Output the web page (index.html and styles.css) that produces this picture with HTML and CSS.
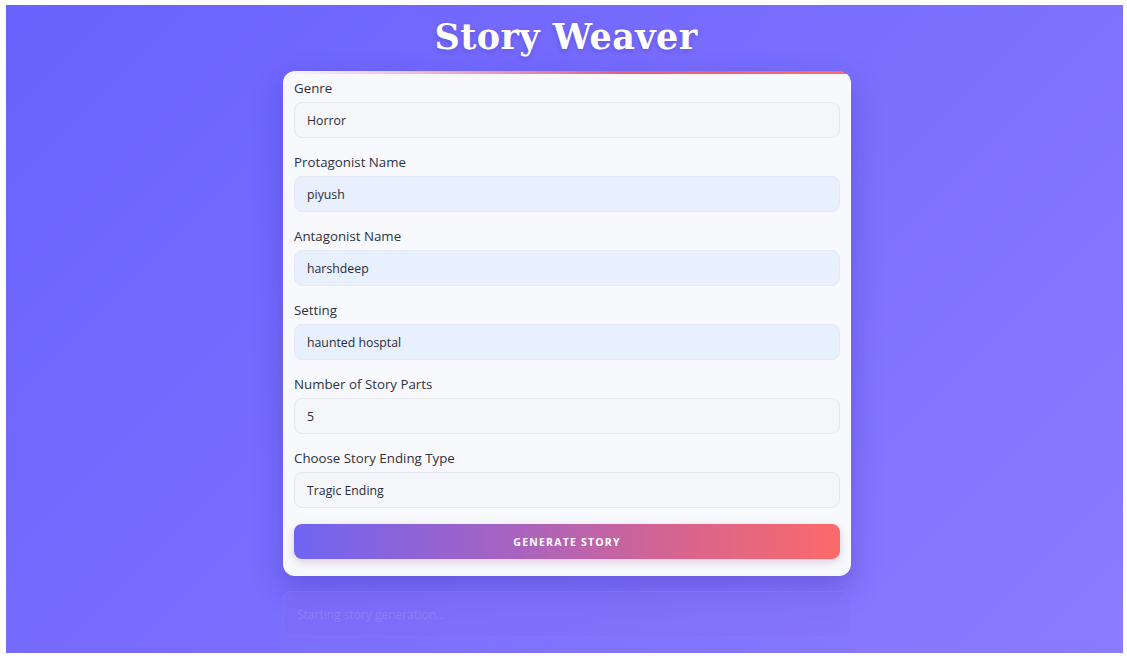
FILE: index.html
```html
<!DOCTYPE html>
<html lang="en">
<head>
<meta charset="utf-8">
<title>Story Weaver</title>
<link rel="stylesheet" href="styles.css">
</head>
<body>
<div class="frame">
  <h1 class="title">Story Weaver</h1>
  <form class="card">
    <div class="field">
      <label class="label">Genre</label>
      <div class="input">Horror</div>
    </div>
    <div class="field">
      <label class="label">Protagonist Name</label>
      <div class="input filled">piyush</div>
    </div>
    <div class="field">
      <label class="label">Antagonist Name</label>
      <div class="input filled">harshdeep</div>
    </div>
    <div class="field">
      <label class="label">Setting</label>
      <div class="input filled">haunted hosptal</div>
    </div>
    <div class="field">
      <label class="label">Number of Story Parts</label>
      <div class="input">5</div>
    </div>
    <div class="field">
      <label class="label">Choose Story Ending Type</label>
      <div class="input">Tragic Ending</div>
    </div>
    <div class="button">GENERATE STORY</div>
  </form>
  <div class="status">Starting story generation...</div>
</div>
</body>
</html>
```

FILE: styles.css
```css
html, body {
  margin: 0;
  padding: 0;
  background: #ffffff;
}
body {
  padding: 5px 4px 8px 6px;
  font-family: "Open Sans", "Liberation Sans", sans-serif;
}
.frame {
  height: 648px;
  overflow: hidden;
  background: linear-gradient(135deg, #6a62fe 0%, #7a6efe 50%, #8b7bff 100%);
  display: flex;
  flex-direction: column;
  align-items: center;
}
.title {
  margin: 12px 0 0 3px;
  height: 54px;
  font-family: "DejaVu Serif", "Liberation Serif", serif;
  font-weight: bold;
  font-size: 35px;
  line-height: 40px;
  color: #ffffff;
  text-shadow: 0 2px 4px rgba(40, 30, 120, 0.25);
  letter-spacing: 0.4px;
}
.card {
  box-sizing: border-box;
  width: 568px;
  margin-left: 5px;
  padding: 9px 11px 17px;
  border-radius: 12px;
  background:
    linear-gradient(90deg, rgba(108, 99, 255, 0) 0%, #e0607a 60%, #ff6b6b 100%) top / 100% 3px no-repeat,
    #f7f9fc;
  box-shadow: 0 12px 30px rgba(40, 30, 140, 0.28);
  display: flex;
  flex-direction: column;
}
.field {
  display: flex;
  flex-direction: column;
  margin-bottom: 16px;
}
.label {
  font-size: 13.3px;
  line-height: 16px;
  font-weight: 500;
  color: #2d3142;
  margin-bottom: 6px;
}
.input {
  box-sizing: border-box;
  height: 36px;
  padding: 0 12px;
  display: flex;
  align-items: center;
  border: 1px solid #e4e8ee;
  border-radius: 8px;
  background: #f4f6f9;
  font-size: 12.3px;
  color: #2a2e3a;
}
.input.filled {
  background: #e8effd;
  border-color: #e3e9f7;
}
.button {
  height: 35px;
  border-radius: 8px;
  background: linear-gradient(90deg, #6f64f2 0%, #a763c0 40%, #d6648f 70%, #fb6a6a 100%);
  color: #ffffff;
  font-size: 10.5px;
  font-weight: 700;
  letter-spacing: 1.2px;
  display: flex;
  align-items: center;
  justify-content: center;
  box-shadow: 0 3px 8px rgba(150, 80, 160, 0.25);
}
.status {
  box-sizing: border-box;
  width: 568px;
  margin: 15px 0 0 5px;
  height: 46px;
  padding: 0 13px;
  display: flex;
  align-items: center;
  border-radius: 8px;
  border: 1px solid rgba(140, 120, 255, 0.4);
  background: rgba(130, 110, 240, 0.3);
  font-size: 12px;
  color: rgba(140, 125, 252, 1);
}
```
